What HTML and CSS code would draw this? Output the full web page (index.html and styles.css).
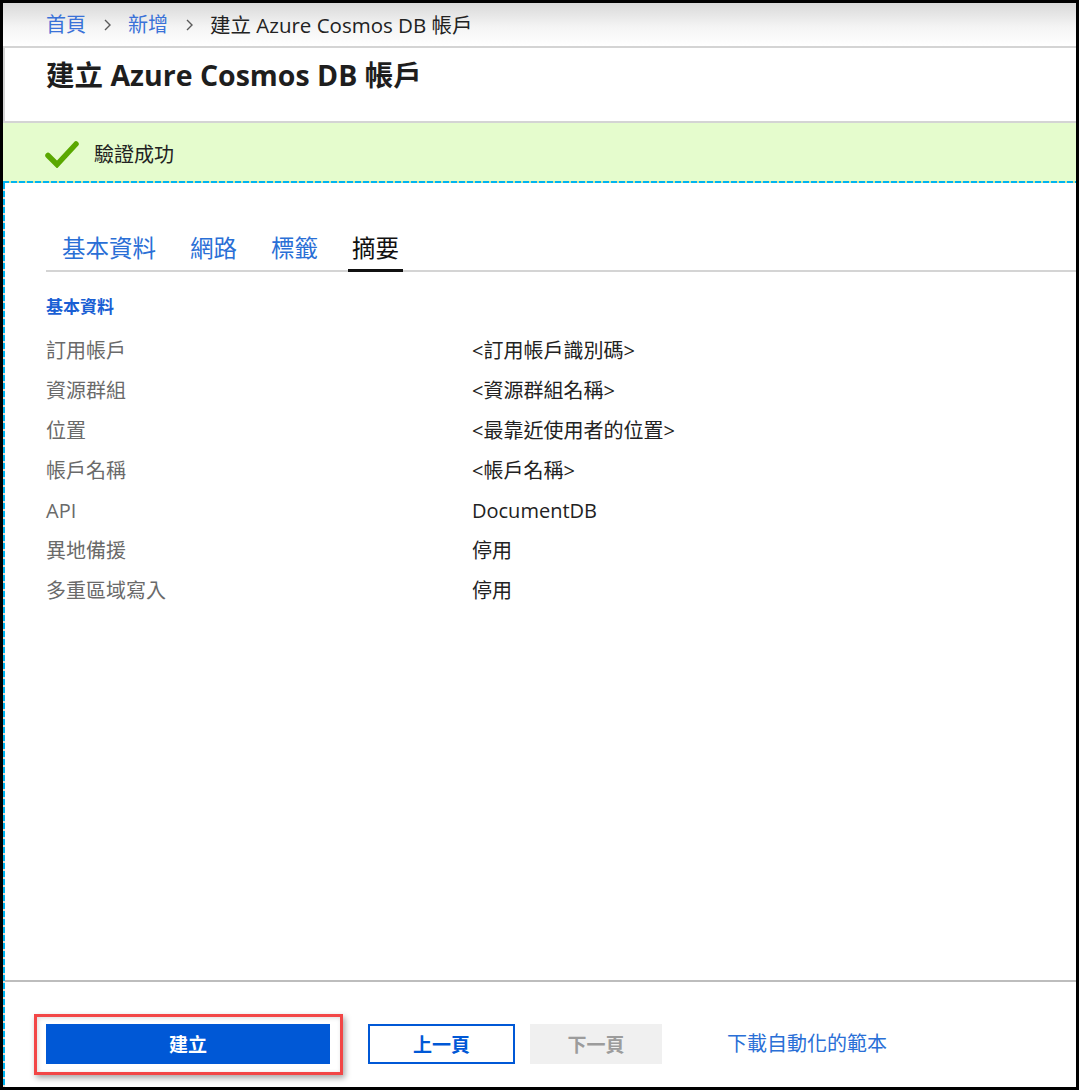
FILE: index.html
```html
<!DOCTYPE html>
<html lang="zh-Hant">
<head>
<meta charset="utf-8">
<title>建立 Azure Cosmos DB 帳戶</title>
<link rel="stylesheet" href="styles.css">
</head>
<body>
<div class="frame">
  <nav class="breadcrumb">
    <a class="crumb-link" href="#">首頁</a>
    <svg class="chev" width="9" height="14" viewBox="0 0 9 14"><polyline points="2,2 7,7 2,12" fill="none" stroke="#5a5a5a" stroke-width="1.4"/></svg>
    <a class="crumb-link" href="#">新增</a>
    <svg class="chev" width="9" height="14" viewBox="0 0 9 14"><polyline points="2,2 7,7 2,12" fill="none" stroke="#5a5a5a" stroke-width="1.4"/></svg>
    <span class="crumb-current">建立 Azure Cosmos DB 帳戶</span>
  </nav>
  <header class="header">
    <h1 class="title">建立 Azure Cosmos DB 帳戶</h1>
  </header>
  <div class="banner">
    <svg class="check" width="34" height="28" viewBox="0 0 34 28"><polyline points="3,15.5 12,24.5 31,4" fill="none" stroke="#5aa800" stroke-width="5.5" stroke-linecap="round" stroke-linejoin="miter"/></svg>
    <span class="banner-text">驗證成功</span>
  </div>
  <main class="content">
    <div class="tabs">
      <a class="tab" href="#"><span class="tab-label">基本資料</span></a>
      <a class="tab" href="#"><span class="tab-label">網路</span></a>
      <a class="tab" href="#"><span class="tab-label">標籤</span></a>
      <a class="tab active" href="#"><span class="tab-label">摘要</span></a>
    </div>
    <section class="summary">
      <h2 class="section-title">基本資料</h2>
      <div class="rows">
        <div class="row"><span class="label">訂用帳戶</span><span class="value">&lt;訂用帳戶識別碼&gt;</span></div>
        <div class="row"><span class="label">資源群組</span><span class="value">&lt;資源群組名稱&gt;</span></div>
        <div class="row"><span class="label">位置</span><span class="value">&lt;最靠近使用者的位置&gt;</span></div>
        <div class="row"><span class="label">帳戶名稱</span><span class="value">&lt;帳戶名稱&gt;</span></div>
        <div class="row"><span class="label">API</span><span class="value">DocumentDB</span></div>
        <div class="row"><span class="label">異地備援</span><span class="value">停用</span></div>
        <div class="row"><span class="label">多重區域寫入</span><span class="value">停用</span></div>
      </div>
    </section>
    <footer class="footer">
      <button class="btn btn-primary highlighted">建立</button>
      <button class="btn btn-outline">上一頁</button>
      <button class="btn btn-disabled">下一頁</button>
      <a class="footer-link" href="#">下載自動化的範本</a>
    </footer>
  </main>
</div>
</body>
</html>
```
FILE: styles.css
```css
* { box-sizing: border-box; }
html, body { margin: 0; padding: 0; background: #fff; }
body {
  font-family: "Open Sans", "Noto Sans CJK TC", sans-serif;
  color: #222;
}
a { text-decoration: none; }

.frame {
  width: 1079px;
  height: 1090px;
  border: 3px solid #000;
  display: flex;
  flex-direction: column;
  overflow: hidden;
}

/* breadcrumb */
.breadcrumb {
  height: 45px;
  flex: none;
  display: flex;
  align-items: center;
  padding-left: 43px;
  padding-top: 1px;
  background: linear-gradient(180deg, #d9d9d9 0%, #f4f4f4 55%, #ffffff 100%);
  border-bottom: 2px solid #d4d4d4;
  font-size: 20px;
  line-height: 28px;
}
.crumb-link { color: #3a72d8; }
.chev { margin: 0 16px 0 17px; }
.crumb-current { color: #222; font-size: 20.5px; }

/* header */
.header {
  height: 75px;
  flex: none;
  border-left: 2px solid #d4d4d4;
  border-bottom: 2px solid #d4d4d4;
  padding: 9px 0 0 41px;
}
.title {
  margin: 0;
  font-size: 28.5px;
  line-height: 36px;
  font-weight: 700;
  color: #1e1e1e;
}

/* banner */
.banner {
  height: 60px;
  flex: none;
  display: flex;
  align-items: center;
  padding: 3px 0 0 42px;
  background:
    repeating-linear-gradient(90deg, #00b4f0 0 6px, #cfe59a 6px 8px) left bottom / 100% 2px no-repeat,
    #e5fccd;
}
.check { margin-right: 15px; margin-top: -2px; }
.banner-text { font-size: 20px; line-height: 28px; color: #222; }

/* content */
.content {
  flex: 1;
  display: flex;
  flex-direction: column;
  padding-left: 2px;
  background: repeating-linear-gradient(180deg, #00b4f0 0 6px, #e8dcd0 6px 8px) left top / 2px 100% no-repeat;
}

.tabs {
  margin: 50px 0 0 41px;
  display: flex;
  border-bottom: 2px solid #d4d4d4;
}
.tab {
  padding: 0 18px 7px 16px;
  font-size: 23.5px;
  line-height: 30px;
  color: #2a6fd6;
}
.tab-label { position: relative; display: inline-block; }
.tab.active { color: #111; padding-left: 16px; }
.tab.active .tab-label::after {
  content: "";
  position: absolute;
  left: -4px;
  right: -4px;
  bottom: -9px;
  height: 3px;
  background: #111;
}

.summary { padding-left: 41px; }
.section-title {
  margin: 23px 0 12px;
  font-size: 17px;
  line-height: 24px;
  font-weight: 700;
  color: #1a5fd4;
}
.row {
  display: grid;
  grid-template-columns: 426px 1fr;
  height: 40px;
  align-items: center;
  font-size: 20px;
  line-height: 28px;
}
.label { color: #6a6a6a; }
.value { color: #222; }

/* footer */
.footer {
  margin-top: auto;
  height: 107px;
  border-top: 2px solid #bdbdbd;
  display: flex;
  align-items: flex-start;
  padding: 42px 0 0 41px;
}
.btn {
  height: 40px;
  font-family: inherit;
  font-size: 19px;
  font-weight: 700;
  border: none;
  padding: 0;
  cursor: pointer;
}
.btn-primary {
  width: 284px;
  background: #0058d6;
  color: #fff;
  position: relative;
}
.highlighted::after {
  content: "";
  position: absolute;
  top: -10px;
  left: -12px;
  right: -13px;
  bottom: -11px;
  border: 3px solid #f24646;
  box-shadow: 2px 3px 6px rgba(0, 0, 0, 0.35), inset 1px 1px 4px rgba(0, 0, 0, 0.15);
}
.btn-outline {
  margin-left: 38px;
  width: 147px;
  background: #fff;
  border: 2px solid #0058d6;
  color: #0058d6;
}
.btn-disabled {
  margin-left: 15px;
  width: 132px;
  background: #f0f0f0;
  color: #9c9c9c;
}
.footer-link {
  margin-left: 65px;
  font-size: 20px;
  line-height: 40px;
  color: #2a6fd6;
}
```
